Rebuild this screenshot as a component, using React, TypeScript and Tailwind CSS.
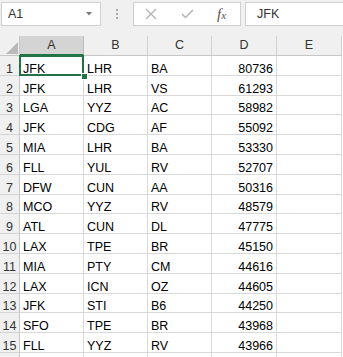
import React from "react";

const rows: [string, string, string, string][] = [
  ["JFK", "LHR", "BA", "80736"],
  ["JFK", "LHR", "VS", "61293"],
  ["LGA", "YYZ", "AC", "58982"],
  ["JFK", "CDG", "AF", "55092"],
  ["MIA", "LHR", "BA", "53330"],
  ["FLL", "YUL", "RV", "52707"],
  ["DFW", "CUN", "AA", "50316"],
  ["MCO", "YYZ", "RV", "48579"],
  ["ATL", "CUN", "DL", "47775"],
  ["LAX", "TPE", "BR", "45150"],
  ["MIA", "PTY", "CM", "44616"],
  ["LAX", "ICN", "OZ", "44605"],
  ["JFK", "STI", "B6", "44250"],
  ["SFO", "TPE", "BR", "43968"],
  ["FLL", "YYZ", "RV", "43966"],
  ["", "", "", ""],
];

const cols = ["A", "B", "C", "D", "E"];

export default function App() {
  return (
    <div
      className="w-[343px] h-[357px] overflow-hidden bg-white text-black"
      style={{ fontFamily: '"Liberation Sans", Arial, sans-serif' }}
    >
      {/* Formula bar */}
      <div className="h-[36px] bg-[#f0f0f0] flex items-start pt-[2px] text-[12.5px] text-[#333]">
        <div className="ml-[1px] w-[100px] h-[24px] bg-white border border-[#d0d0d0] flex items-center pl-[6px] pr-[8px]">
          <span className="flex-1 leading-none">A1</span>
          <svg width="6" height="4" viewBox="0 0 6 4">
            <path d="M0 0 L6 0 L3 3.5 Z" fill="#7a7a7a" />
          </svg>
        </div>
        <div className="w-[32px] h-[24px] flex flex-col items-center justify-center gap-[2px]">
          <div className="w-[2px] h-[2px] bg-[#a8a8a8]" />
          <div className="w-[2px] h-[2px] bg-[#a8a8a8]" />
          <div className="w-[2px] h-[2px] bg-[#a8a8a8]" />
        </div>
        <div className="w-[108px] h-[24px] bg-white border border-[#d0d0d0] flex items-center">
          <svg width="12" height="12" viewBox="0 0 12 12" className="ml-[11px]">
            <path d="M1 1 L11 11 M11 1 L1 11" stroke="#b3b3b3" strokeWidth="1.4" fill="none" />
          </svg>
          <svg width="13" height="10" viewBox="0 0 13 10" className="ml-[24px]">
            <path d="M1 5 L4.5 8.5 L12 1" stroke="#b3b3b3" strokeWidth="1.5" fill="none" />
          </svg>
          <span
            className="ml-[23px] text-[#555] italic leading-none"
            style={{ fontFamily: '"Liberation Serif", "Times New Roman", serif' }}
          >
            <span className="text-[15px]">f</span>
            <span className="text-[11px]">x</span>
          </span>
        </div>
        <div className="ml-[4px] flex-1 h-[24px] bg-white border border-[#d0d0d0] border-r-0 flex items-center pl-[11px]">
          <span className="leading-none">JFK</span>
        </div>
      </div>

      {/* Grid */}
      <div className="relative">
        <div
          className="grid grid-cols-[20px_64px_64px_64px_65px_65px] text-[12.5px]"
          style={{ gridTemplateRows: "20px repeat(15, 19.8px) 20px" }}
        >
          {/* header row */}
          <div className="bg-[#f0f0f0] border-r border-b border-[#c6c6c6] relative">
            <svg width="12" height="12" viewBox="0 0 12 12" className="absolute left-[6px] top-[6px]">
              <path d="M12 0 L12 12 L0 12 Z" fill="#b9b9b9" />
            </svg>
          </div>
          {cols.map((c, i) => (
            <div
              key={c}
              className={
                i === 0
                  ? "bg-[#d4d4d4] border-r border-[#bdbdbd] border-b-2 border-b-[#217346] flex items-center justify-center text-[#333] leading-none"
                  : "bg-[#f0f0f0] border-r border-b border-[#d0d0d0] border-b-[#c6c6c6] flex items-center justify-center text-[#333] leading-none"
              }
            >
              {c}
            </div>
          ))}
          {rows.map((r, ri) => (
            <React.Fragment key={ri}>
              <div className="bg-[#f0f0f0] border-r border-b border-[#c6c6c6] border-b-[#d4d4d4] flex items-end justify-center leading-[12px] text-[#333]">
                {ri < 15 ? ri + 1 : ""}
              </div>
              <div className="border-r border-b border-[#d9d9d9] flex items-end pl-[3px] leading-[12px]">
                {r[0]}
              </div>
              <div className="border-r border-b border-[#d9d9d9] flex items-end pl-[3px] leading-[12px]">
                {r[1]}
              </div>
              <div className="border-r border-b border-[#d9d9d9] flex items-end pl-[3px] leading-[12px]">
                {r[2]}
              </div>
              <div className="border-r border-b border-[#d9d9d9] flex items-end justify-end pr-[3px] leading-[12px]">
                {r[3]}
              </div>
              <div className="border-r border-b border-[#d9d9d9]" />
            </React.Fragment>
          ))}
        </div>
        {/* selection */}
        <div className="absolute left-[19px] top-[19px] w-[65px] h-[21px] border-2 border-[#217346] pointer-events-none" />
        <div className="absolute left-[81px] top-[37px] w-[7px] h-[7px] bg-[#217346] border border-white" />
      </div>
    </div>
  );
}
